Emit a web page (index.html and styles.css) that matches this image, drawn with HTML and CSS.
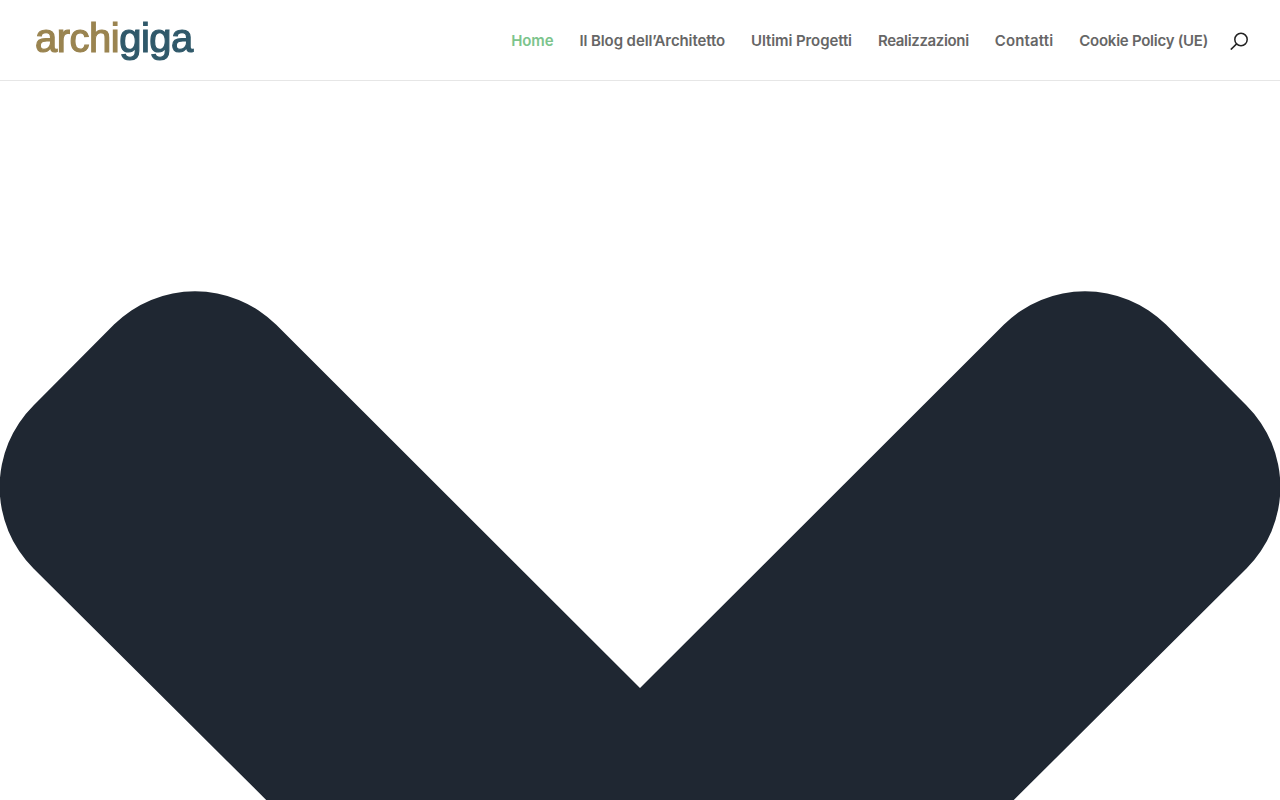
FILE: index.html
```html
<!DOCTYPE html>
<html lang="it">
<head>
    <meta charset="UTF-8">
    <meta name="viewport" content="width=device-width, initial-scale=1.0">
    <title>Archigiga</title>
    <link rel="stylesheet" href="styles.css">
</head>
<body>
    <header class="site-header">
        <a class="logo" href="#"><span class="logo-archi">archi</span><span class="logo-giga">giga</span></a>
        <nav class="main-nav">
            <ul>
                <li><a class="active" href="#">Home</a></li>
                <li><a href="#">Il Blog dell’Architetto</a></li>
                <li><a href="#">Ultimi Progetti</a></li>
                <li><a class="tight" href="#">Realizzazioni</a></li>
                <li><a class="wide" href="#">Contatti</a></li>
                <li><a class="tight-less" href="#">Cookie Policy (UE)</a></li>
            </ul>
            <!-- search -->
            <svg class="search-icon" viewBox="0 0 18 20" aria-hidden="true">
                <circle cx="11" cy="9.5" r="6.2"/>
                <path d="M6.6 13.9 0.8 19.6"/>
            </svg>
        </nav>
    </header>
    <main>
        <svg class="big-arrow" viewBox="0 81 1280 719" aria-hidden="true">
            <path d="M640 688 276 324.6A115 115 0 0 0 114 324.6L33.5 405.5A115 115 0 0 0 33.5 568.5L608 1140A46 46 0 0 0 672 1140L1246.5 568.5A115 115 0 0 0 1246.5 405.5L1166 324.6A115 115 0 0 0 1004 324.6Z"/>
        </svg>
    </main>
</body>
</html>
```

FILE: styles.css
```css
/* Common CSS */
body {
    margin: 0;
    padding: 0;
    background-color: #fff;
    font-family: Inter, "Liberation Sans", sans-serif;
}

.site-header {
    display: flex;
    justify-content: space-between;
    align-items: center;
    box-sizing: border-box;
    height: 81px;
    padding: 0 32px 0 35px;
    border-bottom: 1px solid #e6e6e6;
}

.logo {
    margin-bottom: 4px;
    font-family: "Liberation Sans", Arial, sans-serif;
    font-size: 40px;
    font-weight: 400;
    letter-spacing: -0.5px;
    line-height: 1;
    text-decoration: none;
    filter: blur(0.4px);
}

.logo-archi {
    color: #9a8450;
    -webkit-text-stroke: 1.2px #9a8450;
}

.logo-giga {
    color: #30596a;
    -webkit-text-stroke: 1.2px #30596a;
}

.main-nav {
    display: flex;
    align-items: center;
    gap: 22px;
}

.main-nav ul {
    display: flex;
    gap: 26px;
    list-style: none;
    margin: 0;
    padding: 0;
}

.main-nav a {
    color: #666;
    font-size: 15px;
    font-weight: 600;
    letter-spacing: -0.1px;
    text-decoration: none;
}

.main-nav a.active {
    color: #7cc48c;
}

.main-nav a.tight {
    letter-spacing: -0.35px;
}

.main-nav a.wide {
    letter-spacing: 0.15px;
}

.main-nav a.tight-less {
    letter-spacing: -0.26px;
}

.search-icon {
    display: block;
    width: 18px;
    height: 20px;
    fill: none;
    stroke: #222;
    stroke-width: 1.5;
}

.big-arrow {
    display: block;
    width: 1280px;
    height: 719px;
    fill: #1f2732;
}
```
